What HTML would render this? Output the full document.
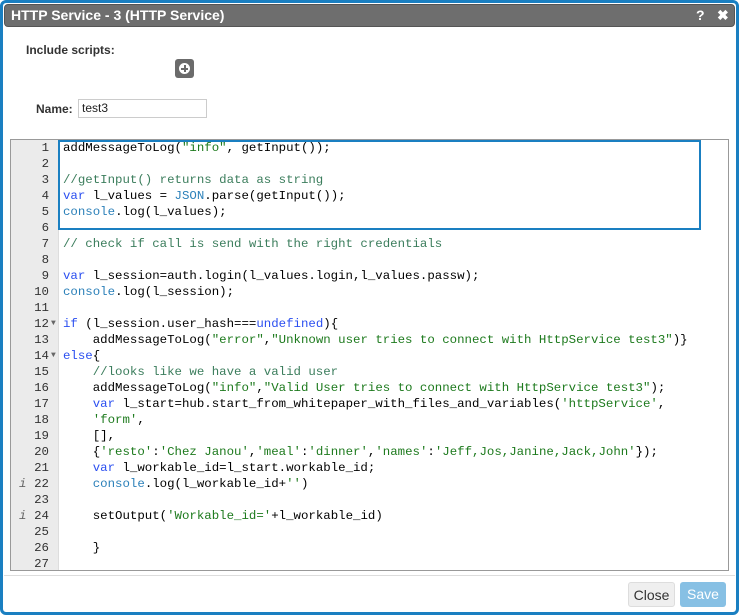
<!DOCTYPE html>
<html><head><style>
body{margin:0;width:739px;height:615px;background:#fff;font-family:"Liberation Sans",sans-serif;overflow:hidden;position:relative}
.frame{position:absolute;left:0;top:0;width:733px;height:609px;border:3px solid #1a7fc1;border-radius:6px;background:#fff}
.title{position:absolute;left:4px;top:4px;width:731px;height:23px;background:#6e6e6e;border:1px solid #555;border-radius:4px;box-sizing:border-box;color:#fff;font-weight:bold;font-size:14px;line-height:21px;padding-left:6px}
.title .ic{position:absolute;top:0;font-size:14px}
.lbl{position:absolute;font-weight:bold;font-size:12px;color:#333}
.plus{position:absolute;left:175px;top:59px;width:19px;height:19px;background:#6b6b6b;border-radius:3px}
.plus::after{content:"";position:absolute;left:4px;top:4px;width:11px;height:11px;border-radius:50%;background:#fff}
.plus i{position:absolute;z-index:2;background:#6b6b6b}
.inp{position:absolute;left:78px;top:99px;width:129px;height:19px;border:1px solid #ccc;box-sizing:border-box;font-size:12px;line-height:17px;padding-left:3px;color:#222}
.ed{position:absolute;left:10px;top:139px;width:719px;height:432px;border:1px solid #999;box-sizing:border-box;overflow:hidden;background:#fff}
.gut{position:absolute;left:0;top:0;width:47px;height:100%;background:#ebebeb;border-right:1px solid #ddd}
.code{position:absolute;left:0;top:0;font-family:"Liberation Mono",monospace;font-size:12.4px;line-height:16px}
.ln{display:block;height:16px;white-space:pre}
.n{display:inline-block;width:38px;text-align:right;color:#333;position:relative}
.ar{position:absolute;left:40px;top:0;font-size:8px;color:#666}
.inf{position:absolute;left:-28px;font-style:italic;color:#666}
.c{padding-left:14px}
.k{color:#2b4ff0}.s{color:#1d7a1d}.m{color:#3b7d5c}.b{color:#2b80b9}
.hl{position:absolute;left:47px;top:0;width:643px;height:90px;border:2px solid #1a7fc1;box-sizing:border-box}
.foot{position:absolute;left:4px;top:575px;width:731px;border-top:1px solid #ddd}
.btn{position:absolute;top:582px;height:25px;font-size:14px;line-height:25px;text-align:center;border-radius:3px}
</style></head><body>
<div class="frame"></div>
<div class="title">HTTP Service - 3 (HTTP Service)<span class="ic" style="left:691px">?</span><span class="ic" style="left:712px">✖</span></div>
<div class="lbl" style="left:26px;top:43px">Include scripts:</div>
<div class="plus"><i style="left:9px;top:6px;width:2px;height:7px"></i><i style="left:6px;top:9px;width:7px;height:2px"></i></div>
<div class="lbl" style="left:36px;top:102px">Name:</div>
<div class="inp">test3</div>
<div class="ed"><div class="gut"></div>
<div class="code"><span class="ln"><span class="n">1</span><span class="c">addMessageToLog(<span class="s">"info"</span>, getInput());</span></span><span class="ln"><span class="n">2</span></span><span class="ln"><span class="n">3</span><span class="c m">//getInput() returns data as string</span></span><span class="ln"><span class="n">4</span><span class="c"><span class="k">var</span> l_values = <span class="b">JSON</span>.parse(getInput());</span></span><span class="ln"><span class="n">5</span><span class="c"><span class="b">console</span>.log(l_values);</span></span><span class="ln"><span class="n">6</span></span><span class="ln"><span class="n">7</span><span class="c m">// check if call is send with the right credentials</span></span><span class="ln"><span class="n">8</span></span><span class="ln"><span class="n">9</span><span class="c"><span class="k">var</span> l_session=auth.login(l_values.login,l_values.passw);</span></span><span class="ln"><span class="n">10</span><span class="c"><span class="b">console</span>.log(l_session);</span></span><span class="ln"><span class="n">11</span></span><span class="ln"><span class="n">12<span class="ar">▼</span></span><span class="c"><span class="k">if</span> (l_session.user_hash===<span class="k">undefined</span>){</span></span><span class="ln"><span class="n">13</span><span class="c">    addMessageToLog(<span class="s">"error"</span>,<span class="s">"Unknown user tries to connect with HttpService test3"</span>)}</span></span><span class="ln"><span class="n">14<span class="ar">▼</span></span><span class="c"><span class="k">else</span>{</span></span><span class="ln"><span class="n">15</span><span class="c m">    //looks like we have a valid user</span></span><span class="ln"><span class="n">16</span><span class="c">    addMessageToLog(<span class="s">"info"</span>,<span class="s">"Valid User tries to connect with HttpService test3"</span>);</span></span><span class="ln"><span class="n">17</span><span class="c">    <span class="k">var</span> l_start=hub.start_from_whitepaper_with_files_and_variables(<span class="s">'httpService'</span>,</span></span><span class="ln"><span class="n">18</span><span class="c">    <span class="s">'form'</span>,</span></span><span class="ln"><span class="n">19</span><span class="c">    [],</span></span><span class="ln"><span class="n">20</span><span class="c">    {<span class="s">'resto'</span>:<span class="s">'Chez Janou'</span>,<span class="s">'meal'</span>:<span class="s">'dinner'</span>,<span class="s">'names'</span>:<span class="s">'Jeff,Jos,Janine,Jack,John'</span>});</span></span><span class="ln"><span class="n">21</span><span class="c">    <span class="k">var</span> l_workable_id=l_start.workable_id;</span></span><span class="ln"><span class="n"><span class="inf" style="left:8px">i</span>22</span><span class="c">    <span class="b">console</span>.log(l_workable_id+<span class="s">''</span>)</span></span><span class="ln"><span class="n">23</span></span><span class="ln"><span class="n"><span class="inf" style="left:8px">i</span>24</span><span class="c">    setOutput(<span class="s">'Workable_id='</span>+l_workable_id)</span></span><span class="ln"><span class="n">25</span></span><span class="ln"><span class="n">26</span><span class="c">    }</span></span><span class="ln"><span class="n">27</span></span></div>
<div class="hl"></div>
</div>
<div class="foot"></div>
<div class="btn" style="left:628px;width:47px;background:#efefef;border:1px solid #ddd;color:#333;box-sizing:border-box">Close</div>
<div class="btn" style="left:680px;width:46px;background:#87c0e4;color:#fff">Save</div>
</body></html>
